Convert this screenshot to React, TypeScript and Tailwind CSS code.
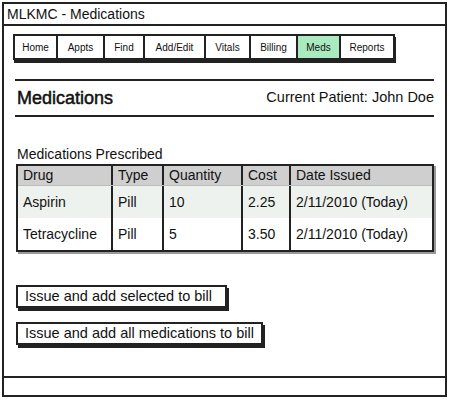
const tabs = [
  { label: "Home", w: "w-[45px]" },
  { label: "Appts", w: "w-[49px]" },
  { label: "Find", w: "w-[42px]" },
  { label: "Add/Edit", w: "w-[63px]" },
  { label: "Vitals", w: "w-[47px]" },
  { label: "Billing", w: "w-[49px]" },
  { label: "Meds", w: "w-[45px]", active: true },
  { label: "Reports", w: "w-[56px]" },
]

const rows = [
  { drug: "Aspirin", type: "Pill", qty: "10", cost: "2.25", date: "2/11/2010 (Today)", bg: "bg-[#eef2ee]" },
  { drug: "Tetracycline", type: "Pill", qty: "5", cost: "3.50", date: "2/11/2010 (Today)", bg: "bg-white" },
]

const cols = ["w-[95px]", "w-[51px]", "w-[79px]", "w-[48px]", "flex-1"]

export default function App() {
  return (
    <div className="w-[450px] h-[400px] bg-white pt-[2px] pl-[2px] text-[#111] font-['Liberation_Sans',sans-serif]">
      <div className="w-[445px] h-[395px] border-2 border-[#222] flex flex-col">
        <div className="h-[22px] border-b-2 border-[#222] px-[3px] flex items-center text-[14px]">
          MLKMC - Medications
        </div>

        <div className="flex-1 pl-[9px] pr-[9px]">
          <div className="flex mt-[8px] shadow-[1px_3px_0_#222] w-fit">
            {tabs.map((t) => (
              <div
                key={t.label}
                className={`${t.w} h-[26px] border-2 border-[#222] -ml-[2px] first:ml-0 flex items-center justify-center text-[10px] ${t.active ? "bg-[#a9ebbf]" : "bg-white"}`}
              >
                {t.label}
              </div>
            ))}
          </div>

          <div className="ml-[2px] mr-[2px] mt-[19px] border-t-2 border-[#222] border-b-2 h-[38px] flex items-center justify-between pl-[2px]">
            <span className="text-[18px] [-webkit-text-stroke:0.5px_#111]">Medications</span>
            <span className="text-[14.5px]">Current Patient: John Doe</span>
          </div>

          <div className="ml-[4px] mt-[29px] text-[14px] leading-[17px]">Medications Prescribed</div>

          <div className="ml-[3px] mt-[1px] w-[418px] border-2 border-[#222] shadow-[2px_2px_0_#999] text-[14px]">
            <div className="flex h-[20px] bg-[#cfcfcf] border-b border-[#bbb]">
              {["Drug", "Type", "Quantity", "Cost", "Date Issued"].map((h, i) => (
                <div
                  key={h}
                  className={`${cols[i]} flex items-center pl-[5px] ${i < 4 ? "border-r-2 border-[#222]" : ""}`}
                >
                  {h}
                </div>
              ))}
            </div>
            {rows.map((r) => (
              <div key={r.drug} className={`flex h-[32px] ${r.bg}`}>
                {[r.drug, r.type, r.qty, r.cost, r.date].map((c, i) => (
                  <div
                    key={i}
                    className={`${cols[i]} flex items-center pl-[5px] ${i < 4 ? "border-r-2 border-[#222]" : ""}`}
                  >
                    {c}
                  </div>
                ))}
              </div>
            ))}
          </div>

          <div className="ml-[3px] mt-[33px] flex flex-col items-start gap-[14px]">
            <div className="h-[23px] w-[211px] border-2 border-[#222] shadow-[2px_3px_0_#222] flex items-center pl-[7px] text-[14.5px]">
              Issue and add selected to bill
            </div>
            <div className="h-[23px] w-[247px] border-2 border-[#222] shadow-[2px_3px_0_#222] flex items-center pl-[7px] text-[14.5px]">
              Issue and add all medications to bill
            </div>
          </div>
        </div>

        <div className="h-[19px] border-t-2 border-[#222]" />
      </div>
    </div>
  )
}
